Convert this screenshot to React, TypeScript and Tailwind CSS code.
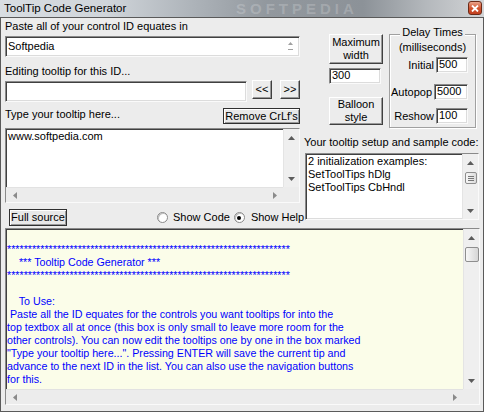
import React from 'react';

const sunken =
  'border border-t-[#8a8a8a] border-l-[#8a8a8a] border-r-[#fafafa] border-b-[#fafafa] shadow-[inset_1px_1px_0_#404040,inset_-1px_-1px_0_#dcdcdc]';
const raised =
  'border border-t-white border-l-white border-r-[#404040] border-b-[#404040] shadow-[inset_-1px_-1px_0_#9a9a9a] bg-[#ececec]';
const focused =
  'border border-[#303030] shadow-[inset_1px_1px_0_#ffffff,inset_-1px_-1px_0_#9a9a9a] bg-[#e8e8e8]';

const TriUp = () => (
  <svg width="7" height="4" viewBox="0 0 7 4">
    <path d="M3.5 0 7 4H0z" fill="#5c5c5c" />
  </svg>
);
const TriDown = () => (
  <svg width="7" height="4" viewBox="0 0 7 4">
    <path d="M0 0h7L3.5 4z" fill="#5c5c5c" />
  </svg>
);
const TriLeft = () => (
  <svg width="4" height="7" viewBox="0 0 4 7">
    <path d="M0 3.5 4 0v7z" fill="#8a8a8a" />
  </svg>
);
const TriRight = () => (
  <svg width="4" height="7" viewBox="0 0 4 7">
    <path d="M4 3.5 0 0v7z" fill="#8a8a8a" />
  </svg>
);

function VScroll({ thumb }: { thumb?: React.ReactNode }) {
  return (
    <div className="w-[16px] h-full flex flex-col bg-[#efefef] border-l border-[#e4e4e4] shrink-0">
      <div className="h-[17px] flex items-center justify-center shrink-0">
        <TriUp />
      </div>
      <div className="flex-1 flex flex-col items-center pt-[1px]">{thumb}</div>
      <div className="h-[17px] flex items-center justify-center shrink-0">
        <TriDown />
      </div>
    </div>
  );
}

function HScroll() {
  return (
    <div className="h-[15px] flex shrink-0">
      <div className="flex-1 flex items-center bg-[#ececec] border-t border-[#e2e2e2]">
        <div className="w-[17px] flex justify-center">
          <TriLeft />
        </div>
        <div className="flex-1" />
        <div className="w-[17px] flex justify-center">
          <TriRight />
        </div>
      </div>
      <div className="w-[16px] bg-[#ececec]" />
    </div>
  );
}

function Radio({ checked }: { checked?: boolean }) {
  return (
    <div className="w-[11px] h-[11px] rounded-full bg-white border border-[#8a8a8a] shadow-[inset_1px_1px_0_#c0c0c0] flex items-center justify-center shrink-0">
      {checked && <div className="w-[4px] h-[4px] rounded-full bg-black" />}
    </div>
  );
}

const stars = '*'.repeat(68);
const helpText = [
  '',
  stars,
  '    *** Tooltip Code Generator ***',
  stars,
  '',
  '    To Use:',
  ' Paste all the ID equates for the controls you want tooltips for into the',
  'top textbox all at once (this box is only small to leave more room for the',
  'other controls). You can now edit the tooltips one by one in the box marked',
  '"Type your tooltip here...". Pressing ENTER will save the current tip and',
  'advance to the next ID in the list. You can also use the navigation buttons',
  'for this.',
].join('\n');

function TitleBar() {
  return (
    <div className="relative h-[17px] shrink-0 bg-[linear-gradient(90deg,#d8dde2_0%,#d0d5da_22%,#adb3b9_40%,#92989e_55%,#8c9298_75%,#b4b8bc_88%,#d2d4d6_100%)]">
      <div className="absolute left-[236px] top-[1px] text-[15px] leading-[15px] font-bold tracking-[4px] text-white/20 whitespace-nowrap">
        SOFTPEDIA
      </div>
      <div className="relative flex items-start pl-[4px] pt-[1px] text-[11.5px] leading-[14px] text-black">
        ToolTip Code Generator
      </div>
      <div className="absolute right-[2px] top-[1px] w-[14px] h-[14px] rounded-[3px] border border-[#6d2b18] bg-[linear-gradient(#eaa58c,#d25530_50%,#c24020)] flex items-center justify-center">
        <svg width="8" height="7" viewBox="0 0 8 7">
          <path d="M1 0.5 7 6.5M7 0.5 1 6.5" stroke="#fff" strokeWidth="1.8" />
        </svg>
      </div>
    </div>
  );
}

function LeftCol() {
  return (
    <div className="w-[295px] flex flex-col shrink-0">
      <div className="h-[18px] pt-[1px] leading-[14px]">Paste all of your control ID equates in</div>
      <div className={`${sunken} bg-white h-[21px] flex`}>
        <div className="flex-1 pl-[2px] pt-[1px] leading-[17px]">Softpedia</div>
        <div className="w-[16px] mr-[1px] flex flex-col items-center justify-center gap-[4px]">
          <svg width="5" height="3" viewBox="0 0 5 3">
            <path d="M2.5 0 5 3H0z" fill="#a0a0a0" />
          </svg>
          <svg width="5" height="2" viewBox="0 0 5 2">
            <path d="M0 0h5v1H0z" fill="#a0a0a0" />
          </svg>
        </div>
      </div>
      <div className="h-[24px] pt-[7px] leading-[14px]">Editing tooltip for this ID...</div>
      <div className="h-[21px] flex items-start">
        <div className={`${sunken} bg-white w-[242px] h-[21px]`} />
        <div className={`${raised} ml-[5px] -mt-[1px] w-[20px] h-[19px] flex items-center justify-center`}>&lt;&lt;</div>
        <div className={`${raised} ml-[8px] -mt-[1px] w-[20px] h-[19px] flex items-center justify-center`}>&gt;&gt;</div>
      </div>
      <div className="mt-[5px] h-[17px] flex items-start">
        <div className="leading-[14px]">Type your tooltip here...</div>
        <div className={`${focused} ml-auto mt-[1px] w-[77px] h-[16px] flex items-center justify-center leading-[13px]`}>
          Remove CrLf's
        </div>
      </div>
      <div className={`${sunken} bg-white mt-[4px] h-[75px] flex flex-col`}>
        <div className="flex-1 flex min-h-0">
          <div className="flex-1 pl-[2px] pt-[1px] leading-[13px]">www.softpedia.com</div>
          <VScroll />
        </div>
        <HScroll />
      </div>
      <div className="mt-[6px] h-[17px] flex items-center whitespace-nowrap">
        <div className={`${focused} ml-[4px] w-[58px] h-[17px] flex items-center justify-center shrink-0`}>Full source</div>
        <div className="ml-[90px] flex items-center shrink-0">
          <Radio />
          <span className="ml-[5px]">Show Code</span>
          <div className="ml-[4px]">
            <Radio checked />
          </div>
          <span className="ml-[6px]">Show Help</span>
        </div>
      </div>
    </div>
  );
}

function DelayRow({ label, value, w, mt }: { label: string; value: string; w: string; mt: string }) {
  return (
    <div className={`${mt} h-[16px] flex items-center justify-end gap-[2px] pr-[7px]`}>
      <span className="leading-[13px]">{label}</span>
      <div className={`${sunken} bg-white ${w} h-[16px] pl-[2px] leading-[13px]`}>{value}</div>
    </div>
  );
}

function RightCol() {
  return (
    <div className="flex-1 flex flex-col">
      <div className="flex pl-[29px]">
        <div className="w-[54px] flex flex-col">
          <div className={`${raised} mt-[16px] h-[30px] flex items-center justify-center text-center leading-[13px]`}>
            Maximum
            <br />
            width
          </div>
          <div className={`${sunken} bg-white mt-[4px] w-[52px] h-[16px] pl-[2px] leading-[13px]`}>300</div>
          <div className={`${raised} mt-[13px] h-[28px] flex items-center justify-center text-center leading-[13px]`}>
            Balloon
            <br />
            style
          </div>
        </div>
        <div className="relative ml-[6px] mt-[16px] w-[87px] h-[94px] border border-[#a0a0a0] shadow-[inset_1px_1px_0_#ffffff,1px_1px_0_#ffffff] flex flex-col">
          <div className="absolute left-0 right-0 top-[-9px] flex justify-center leading-[13px]">
            <span className="bg-[#ececec] px-[2px]">Delay Times</span>
          </div>
          <div className="mt-[6px] text-center leading-[13px]">(milliseconds)</div>
          <DelayRow label="Initial" value="500" w="w-[32px]" mt="mt-[3px]" />
          <DelayRow label="Autopop" value="5000" w="w-[34px]" mt="mt-[11px]" />
          <DelayRow label="Reshow" value="100" w="w-[32px]" mt="mt-[8px]" />
        </div>
      </div>
      <div className="mt-[7px] h-[18px] pl-[4px] leading-[14px] whitespace-nowrap">Your tooltip setup and sample code:</div>
      <div className={`${sunken} bg-white ml-[5px] w-[174px] h-[67px] flex`}>
        <div className="flex-1 pl-[2px] pt-[1px] leading-[13px]">
          2 initialization examples:
          <br />
          SetToolTips hDlg
          <br />
          SetToolTips CbHndl
        </div>
        <VScroll
          thumb={
            <div className="w-[12px] h-[12px] rounded-[2px] border border-[#8e8e8e] bg-[linear-gradient(90deg,#f6f6f6,#dcdcdc)] flex flex-col items-center justify-center gap-[1px]">
              <div className="w-[6px] h-px bg-[#777]" />
              <div className="w-[6px] h-px bg-[#777]" />
              <div className="w-[6px] h-px bg-[#777]" />
            </div>
          }
        />
      </div>
    </div>
  );
}

function HelpBox() {
  return (
    <div className={`${sunken} bg-[#fbfde9] mt-[2px] h-[177px] flex flex-col`}>
      <div className="flex-1 flex min-h-0">
        <div className="flex-1 pl-[1px] pt-[1px] text-[10.7px] leading-[13px] text-[#0000ff] whitespace-pre overflow-hidden">
          {helpText}
        </div>
        <VScroll
          thumb={
            <div className="w-[14px] h-[15px] rounded-[2px] border border-[#8e8e8e] bg-[linear-gradient(90deg,#f7f7f7,#d6d6d6)]" />
          }
        />
      </div>
      <HScroll />
    </div>
  );
}

export default function App() {
  return (
    <div className="w-[484px] h-[412px] flex flex-col bg-[#ececec] font-['Liberation_Sans',Arial,sans-serif] text-[11px] text-black overflow-hidden">
      <TitleBar />
      <div className="flex-1 flex flex-col border-l border-r border-b border-t border-[#5a5a5a] pl-[4px] pr-[3px]">
        <div className="flex">
          <LeftCol />
          <RightCol />
        </div>
        <HelpBox />
      </div>
    </div>
  );
}
